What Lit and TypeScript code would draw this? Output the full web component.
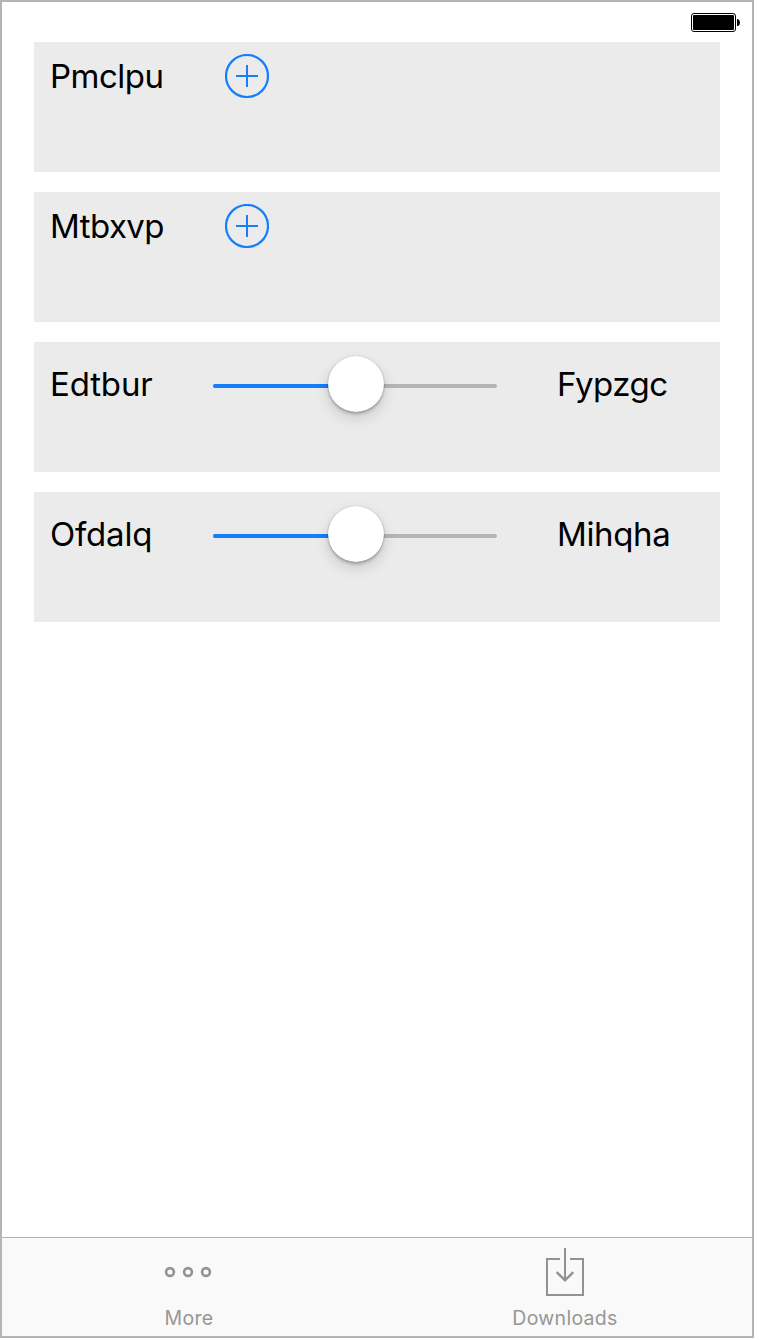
import { LitElement, html, css, svg } from "lit";
import { customElement, property } from "lit/decorators.js";

@customElement("add-button")
class AddButton extends LitElement {
  static styles = css`
    :host { display: block; width: 44px; height: 44px; }
    svg { display: block; }
  `;
  render() {
    return html`<svg width="44" height="44" fill="none" stroke="#147efb" stroke-width="2">
      <circle cx="22" cy="22" r="21" stroke-width="2.2" /><path d="M22 11v22M11 22h22" />
    </svg>`;
  }
}

@customElement("value-slider")
class ValueSlider extends LitElement {
  @property({ type: Number }) value = 0.5;
  static styles = css`
    :host { display: block; width: 284px; height: 56px; }
    .track {
      position: relative; display: flex; align-items: center; height: 60px;
    }
    .rail { flex: 1; height: 4px; border-radius: 2px; background: #b5b5b5; overflow: hidden; }
    .fill { height: 4px; background: #147efb; }
    .thumb {
      position: absolute; top: 0; width: 56px; height: 56px; border-radius: 50%;
      background: #fff; transform: translateX(-50%);
      box-shadow: 0 0 1px rgba(0,0,0,.3), 0 2px 3px rgba(0,0,0,.24), 0 6px 14px rgba(0,0,0,.15);
    }
  `;
  render() {
    const pos = `${this.value * 100}%`;
    return html`<div class="track">
      <div class="rail"><div class="fill" style="width:${pos}"></div></div>
      <div class="thumb" style="left:${28 + this.value * 228 + 1}px"></div>
    </div>`;
  }
}

const moreIcon = svg`<svg width="48" height="52" fill="none" stroke="#929292" stroke-width="2.6">
  <circle cx="6" cy="26" r="3.9"/><circle cx="24" cy="26" r="3.9"/><circle cx="42" cy="26" r="3.9"/></svg>`;
const downloadIcon = svg`<svg width="40" height="52" fill="none" stroke="#929292" stroke-width="2">
  <path d="M15 13H2v36h36V13H25M20 2v32"/><path stroke-width="2.4" d="M11.7 26.2l8.3 8.1 8.3-8.1"/></svg>`;

@customElement("app-root")
class AppRoot extends LitElement {
  static styles = css`
    :host { display: block; font-family: Inter, "Liberation Sans", sans-serif; color: #000; background: #fff; }
    .screen {
      box-sizing: border-box; width: 754px; height: 1338px; border: 2px solid #b4b4b4;
      display: flex; flex-direction: column; background: #fff;
    }
    .status { height: 40px; display: flex; justify-content: flex-end; padding: 11px 12px 0 0; box-sizing: border-box; }
    .list { flex: 1; display: flex; flex-direction: column; gap: 20px; padding: 0 32px; }
    .row {
      box-sizing: border-box; height: 130px; background: #ebebeb; padding: 12px 0 0 16px;
      display: flex; align-items: flex-start;
    }
    .label { font-size: 33px; line-height: 44px; white-space: nowrap; }
    .row .name { width: 175px; }
    .slide .name { width: 163px; }
    .slide .label { padding-top: 8px; }
    value-slider { margin: 2px 60px 0 0; }
    .pmclpu { letter-spacing: -.5px; }
    .mtbxvp { letter-spacing: -.55px; }
    .edtbur { letter-spacing: -.15px; }
    .fypzgc { letter-spacing: -.45px; }
    .ofdalq { letter-spacing: -.2px; }
    .mihqha { letter-spacing: -.35px; }
    .tabs {
      box-sizing: border-box; height: 99px; border-top: 1px solid #b2b2b2; background: #f9f9f9;
      display: flex; color: #969696;
    }
    .tab { width: 382px; padding-top: 8px; display: flex; flex-direction: column; align-items: center; flex: none; }
    .tab svg { display: block; }
    .tab span { font-size: 19.5px; line-height: 24px; margin-top: 8px; letter-spacing: .3px; }
    .tab.more { width: 372px; }
    .tab.more span { padding-left: 2px; }
  `;
  render() {
    return html`<div class="screen">
      <div class="status">
        <svg width="49" height="19">
          <rect x=".5" y=".5" width="44" height="18" rx="2.5" fill="none" stroke="#000" />
          <rect x="2" y="2" width="41" height="15" rx="1" />
          <path d="M46 6h1q2 1 2 3.5t-2 3.5h-1z" />
        </svg>
      </div>
      <div class="list">
        ${["Pmclpu", "Mtbxvp"].map(
          (t) => html`<div class="row"><div class="label name"><span class=${t.toLowerCase()}>${t}</span></div><add-button></add-button></div>`
        )}
        ${[["Edtbur", "Fypzgc"], ["Ofdalq", "Mihqha"]].map(
          ([a, b]) => html`<div class="row slide">
            <div class="label name"><span class=${a.toLowerCase()}>${a}</span></div>
            <value-slider .value=${0.5}></value-slider>
            <div class="label"><span class=${b.toLowerCase()}>${b}</span></div>
          </div>`
        )}
      </div>
      <div class="tabs">
        <div class="tab more">${moreIcon}<span>More</span></div>
        <div class="tab">${downloadIcon}<span>Downloads</span></div>
      </div>
    </div>`;
  }
}
